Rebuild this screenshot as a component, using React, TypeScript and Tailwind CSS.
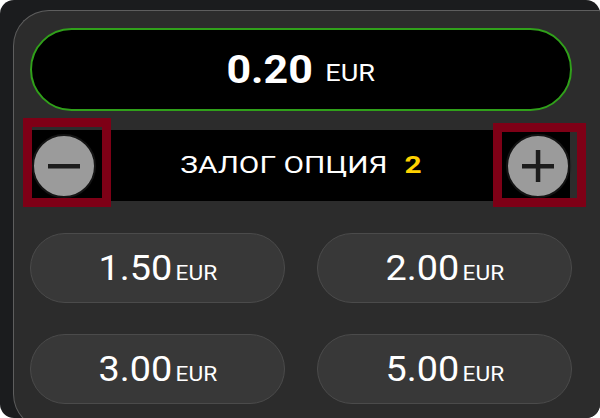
const presets = ["1.50", "2.00", "3.00", "5.00"];

function RoundButton({ kind }: { kind: "minus" | "plus" }) {
  return (
    <div className="flex h-[64px] w-[64px] items-center justify-center rounded-full border-2 border-[#141414] bg-[#9b9b9b] shadow-[0_0_2px_#000]">
      <svg width="34" height="34" viewBox="0 0 34 34">
        <rect x="1" y="15" width="32" height="4.5" fill="#1c1c1c" />
        {kind === "plus" && <rect x="14.8" y="1" width="4.5" height="32" fill="#1c1c1c" />}
      </svg>
    </div>
  );
}

export default function App() {
  return (
    <div className="relative h-[418px] w-[600px] overflow-hidden bg-white font-['Roboto',sans-serif] text-white">
      <div className="h-full overflow-hidden rounded-[14px] bg-[#1b1c1e] pl-[13px] pt-[10px]">
        <div className="flex h-[420px] flex-col rounded-l-[36px] border-y border-l border-[#5e5e5e] bg-[#2c2c2c] pl-[16px] pr-[28px] pt-[17px]">
          {/* current stake */}
          <div className="flex h-[83px] items-center justify-center rounded-full border-2 border-[#30a01a] bg-black">
            <div className="flex scale-x-[1.13] items-center">
              <span className="text-[38px] font-bold leading-none">0.20</span>
              <span className="ml-[11px] mt-[6px] text-[24px] leading-none">EUR</span>
            </div>
          </div>

          {/* option stepper */}
          <div className="mx-[2px] mt-[19px] flex h-[71px] items-center justify-between bg-black">
            <RoundButton kind="minus" />
            <div className="flex scale-x-[1.3] items-center text-[23px] leading-none">
              <span>ЗАЛОГ ОПЦИЯ</span>
              <span className="ml-[13px] font-bold text-[#ffd200]">2</span>
            </div>
            <RoundButton kind="plus" />
          </div>

          {/* presets */}
          <div className="mt-[32px] grid grid-cols-2 gap-x-[32px] gap-y-[31px]">
            {presets.map((p) => (
              <button
                key={p}
                className="flex h-[70px] items-center justify-center rounded-full border border-[#4b4b4b] bg-[#383838] text-white"
              >
                <span className="flex scale-x-[1.08] items-baseline">
                  <span className="text-[35px] leading-none">{p}</span>
                  <span className="ml-[3px] text-[21px] leading-none">EUR</span>
                </span>
              </button>
            ))}
          </div>
        </div>
      </div>

      {/* highlight boxes */}
      <div className="absolute left-[23px] top-[118px] h-[89px] w-[88px] border-[9px] border-[#7e0016]" />
      <div className="absolute left-[493px] top-[123px] h-[84px] w-[93px] border-[9px] border-[#7e0016]" />
    </div>
  );
}
